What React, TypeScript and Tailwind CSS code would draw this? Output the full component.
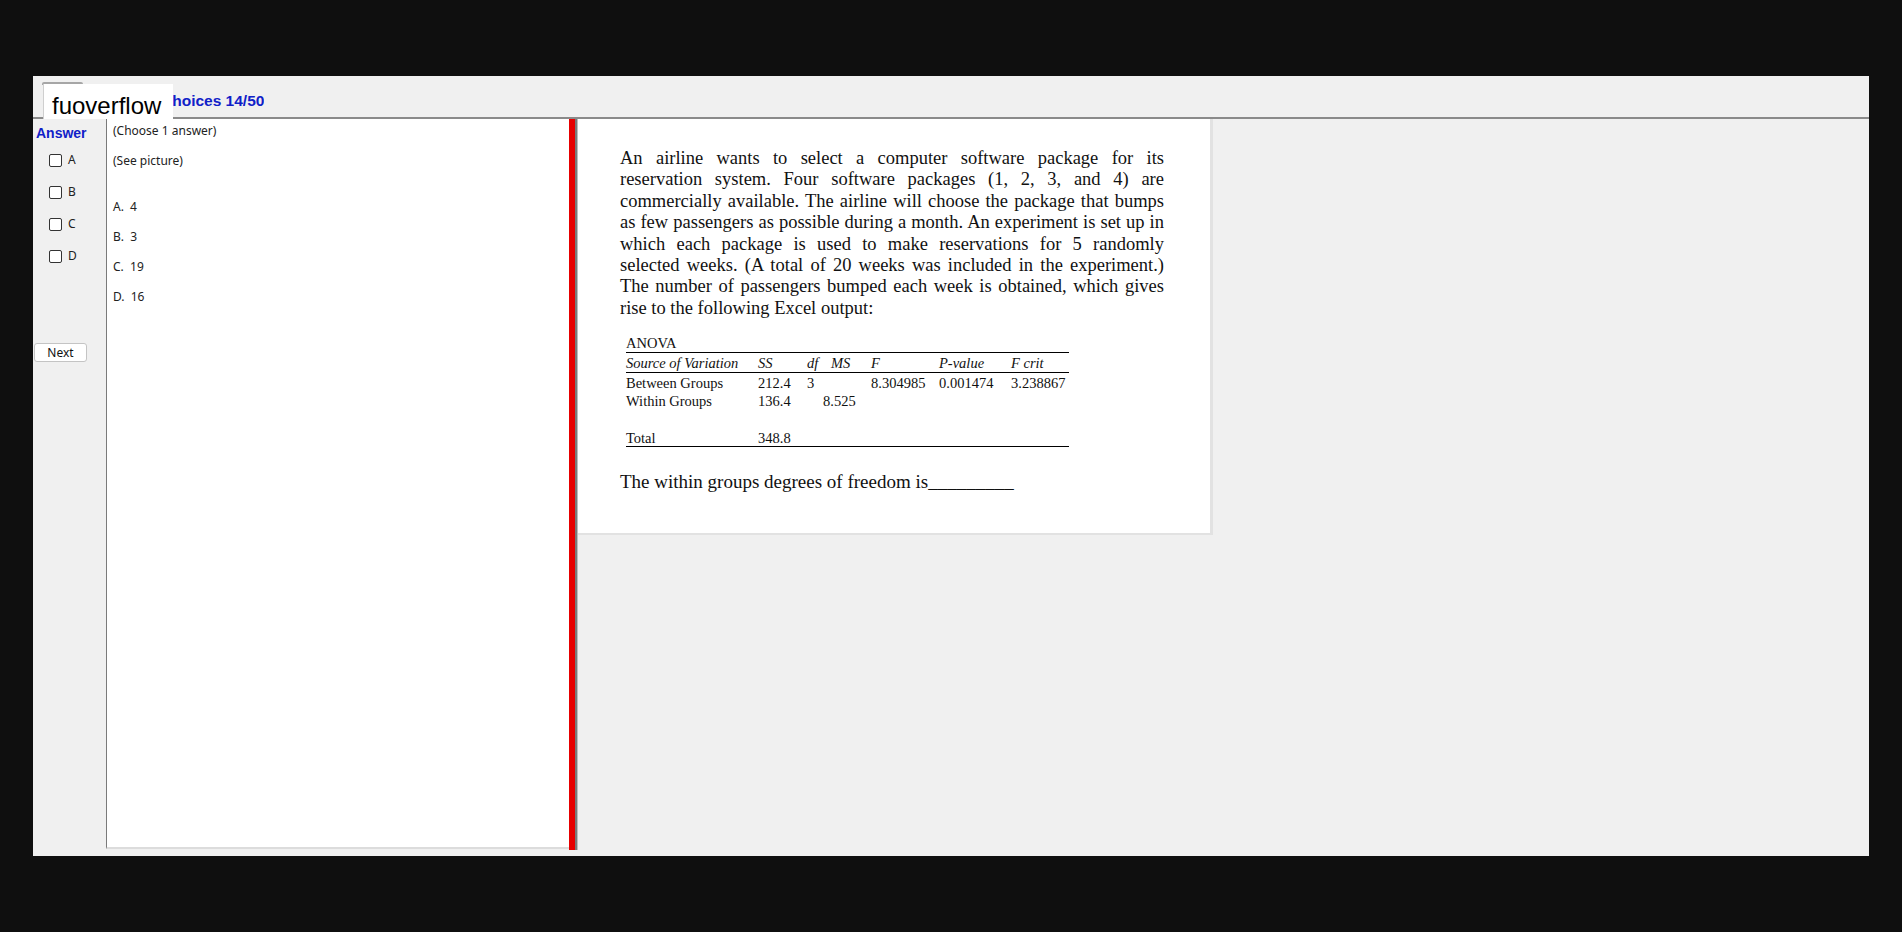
import React from 'react';

const sans = { fontFamily: '"Noto Sans", "Liberation Sans", sans-serif' };
const arial = { fontFamily: '"Liberation Sans", Arial, sans-serif' };
const serif = { fontFamily: '"Liberation Serif", "Times New Roman", serif' };

const paragraph = [
  'An airline wants to select a computer software package for its',
  'reservation system. Four software packages (1, 2, 3, and 4) are',
  'commercially available. The airline will choose the package that bumps',
  'as few passengers as possible during a month. An experiment is set up in',
  'which each package is used to make reservations for 5 randomly',
  'selected weeks. (A total of 20 weeks was included in the experiment.)',
  'The number of passengers bumped each week is obtained, which gives',
];

const choices = ['A', 'B', 'C', 'D'];
const answers = ['A.  4', 'B.  3', 'C.  19', 'D.  16'];

function Checkbox({ label }: { label: string }) {
  return (
    <div className="flex h-[32px] items-center pl-[16px]">
      <span className="block h-[13px] w-[13px] rounded-[2px] border border-[#333] bg-white" />
      <span className="ml-[6px] text-[12px] leading-none text-[#222]" style={sans}>
        {label}
      </span>
    </div>
  );
}

function AnovaTable() {
  const cols = 'grid grid-cols-[132px_49px_24px_40px_68px_72px_58px]';
  return (
    <div className="ml-[48px] mt-[15px] w-[443px] text-[14.5px] text-[#111]" style={serif}>
      <div className="h-[19px] border-b border-black leading-[18px]">ANOVA</div>
      <div className={`${cols} h-[20px] items-center border-b border-black italic`}>
        <span>Source of Variation</span>
        <span>SS</span>
        <span>df</span>
        <span>MS</span>
        <span>F</span>
        <span>P-value</span>
        <span>F crit</span>
      </div>
      <div className={`${cols} h-[18px] items-center`}>
        <span>Between Groups</span>
        <span>212.4</span>
        <span>3</span>
        <span />
        <span>8.304985</span>
        <span>0.001474</span>
        <span>3.238867</span>
      </div>
      <div className={`${cols} h-[19px] items-center`}>
        <span>Within Groups</span>
        <span>136.4</span>
        <span />
        <span className="-ml-[8px]">8.525</span>
        <span />
        <span />
        <span />
      </div>
      <div className="h-[18px]" />
      <div className={`${cols} h-[19px] items-center border-b border-black`}>
        <span>Total</span>
        <span>348.8</span>
      </div>
    </div>
  );
}

function QuestionPicture() {
  return (
    <div className="h-[416px] w-[635px] border-r-[3px] border-b-2 border-[#e2e2e2] bg-white">
      <div className="ml-[42px] w-[544px] pt-[29px] text-[18.5px] leading-[21.4px] text-[#111]" style={serif}>
        {paragraph.map((line) => (
          <div key={line} className="text-justify [text-align-last:justify]">
            {line}
          </div>
        ))}
        <div>rise to the following Excel output:</div>
      </div>
      <AnovaTable />
      <div className="ml-[42px] mt-[24px] text-[19px] leading-[22px] text-[#111]" style={serif}>
        The within groups degrees of freedom is_________
      </div>
    </div>
  );
}

export default function App() {
  return (
    <div className="h-[932px] w-[1902px] bg-[#0f0f0f] pl-[33px] pt-[76px]">
      <div className="flex h-[780px] w-[1836px] flex-col bg-[#f0f0f0]">
        <div className="relative flex h-[43px] border-b-2 border-[#8a8a8a]">
          <div className="w-[140px] shrink-0" />
          <div className="overflow-hidden pt-[16px]">
            <div className="-ml-[12px] whitespace-nowrap text-[15.5px] font-bold leading-[18px] text-[#1020c8]" style={arial}>
              Choices 14/50
            </div>
          </div>
          <div className="absolute left-[9px] top-[6px] h-[3px] w-[41px] rounded-t-[2px] bg-[#a6a6a6]" />
          <div
            className="absolute left-[10px] top-[8px] h-[35px] w-[130px] border-l border-[#cfcfcf] bg-white pl-[8px] pt-[10px] text-[24px] leading-none text-black"
            style={arial}
          >
            fuoverflow
          </div>
        </div>
        <div className="flex flex-1">
          <div className="w-[73px] shrink-0">
            <div className="ml-[3px] mt-[6px] h-[16px] text-[14px] font-bold leading-[16px] text-[#1020c8]" style={arial}>
              Answer
            </div>
            <div className="mt-[3px]">
              {choices.map((c) => (
                <Checkbox key={c} label={c} />
              ))}
            </div>
            <button
              className="ml-[1px] mt-[71px] flex h-[19px] w-[53px] items-center justify-center rounded-[3px] border border-[#c4c4c4] bg-white text-[12px] text-[#111]"
              style={sans}
            >
              Next
            </button>
          </div>
          <div className="h-[730px] w-[463px] shrink-0 border-l border-b-2 border-l-[#7a7a7a] border-b-[#dcdcdc] bg-white pl-[6px] pt-[4px] text-[12px] leading-[16px] text-[#222]" style={sans}>
            <div>(Choose 1 answer)</div>
            <div className="mt-[14px]">(See picture)</div>
            {answers.map((a, i) => (
              <div key={a} className={`whitespace-pre ${i === 0 ? 'mt-[30px]' : 'mt-[14px]'}`}>
                {a}
              </div>
            ))}
          </div>
          <div className="h-[731px] w-[6px] shrink-0 bg-[#e60000]" />
          <div className="h-[731px] w-[3px] shrink-0 border-l-2 border-[#7a7a7a] bg-[#bdbdbd]" />
          <QuestionPicture />
        </div>
      </div>
    </div>
  );
}
